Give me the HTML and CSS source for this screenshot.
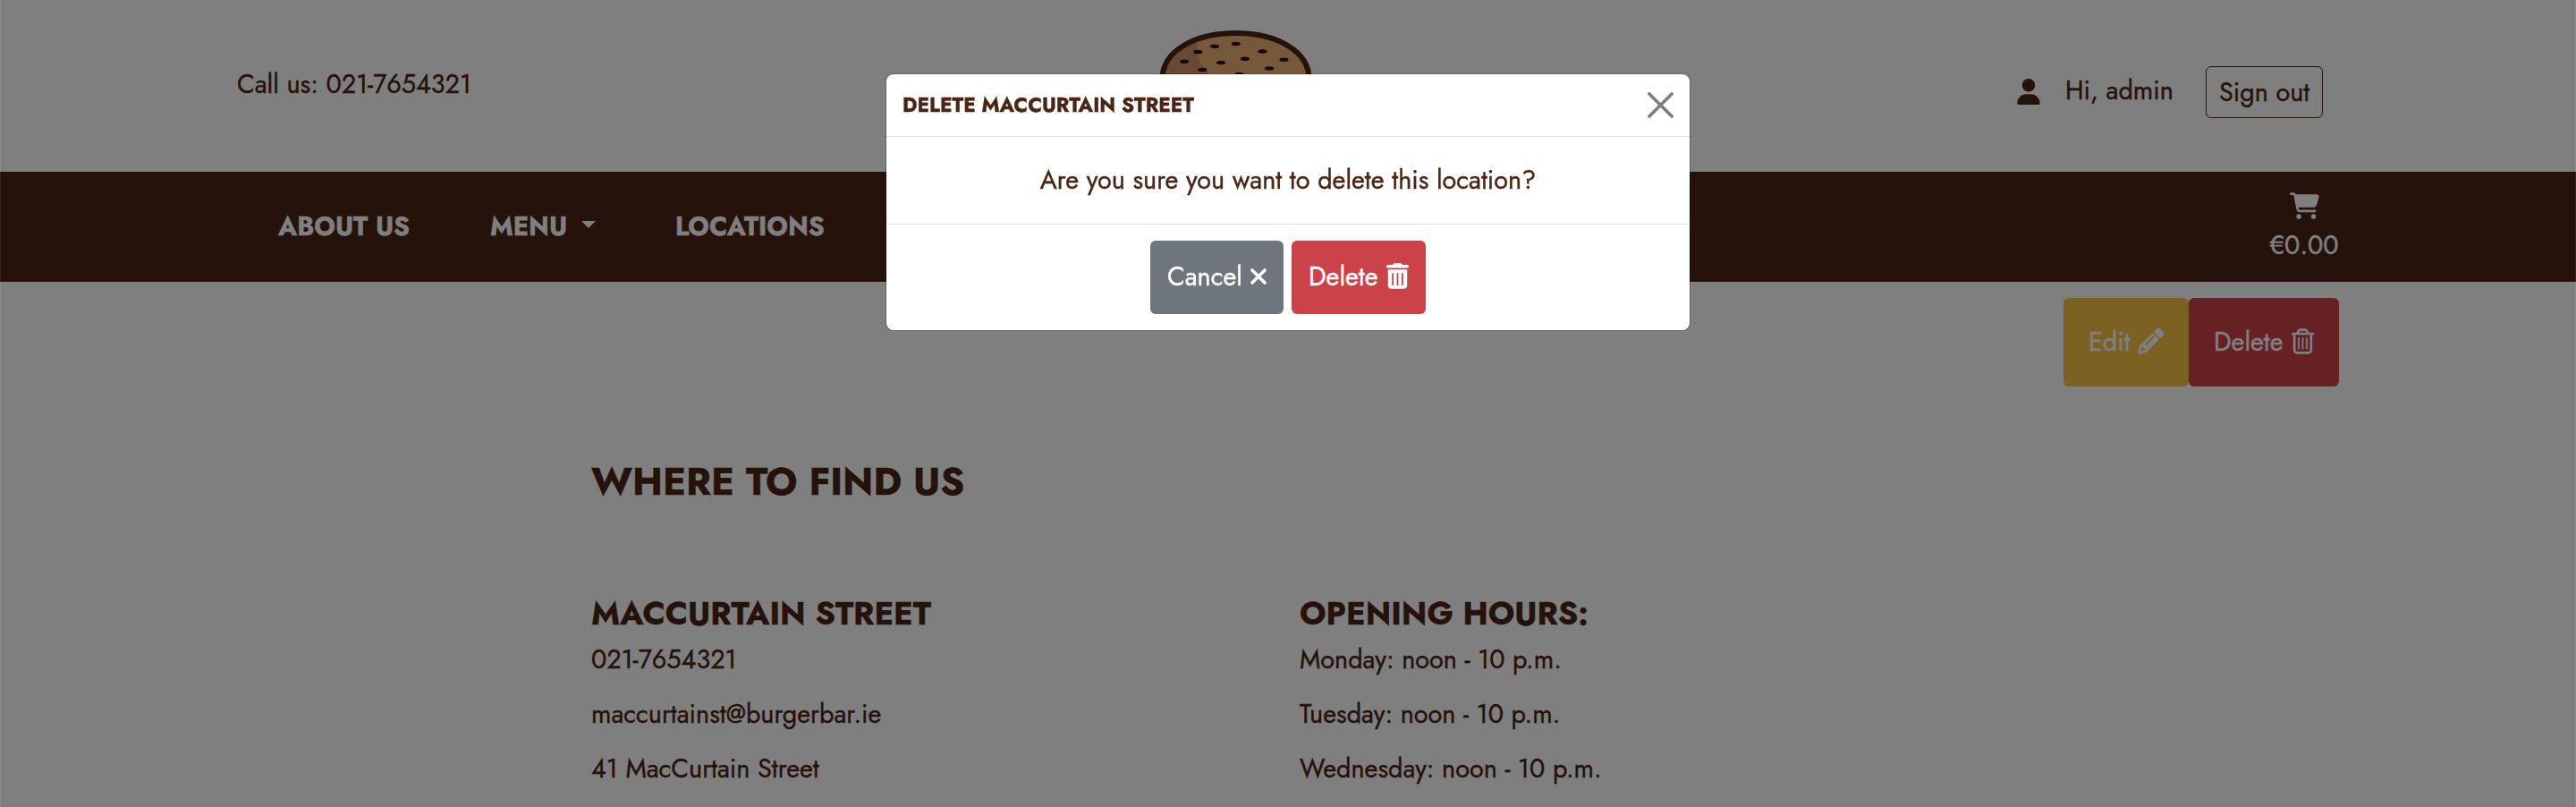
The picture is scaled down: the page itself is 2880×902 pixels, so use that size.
FILE: index.html
```html
<!DOCTYPE html>
<html lang="en">
<head>
<meta charset="utf-8">
<title>Burger Bar - Locations</title>
<link rel="stylesheet" href="styles.css">
</head>
<body>
<header class="topbar">
  <span class="call">Call us: 021-7654321</span>
  <svg class="logo" viewBox="0 0 170 120" preserveAspectRatio="none" aria-label="Burger Bar">
    <defs><clipPath id="bun"><path d="M4 66V54C4 24 40 4 85 4s81 20 81 50v12z"/></clipPath></defs>
    <g clip-path="url(#bun)">
      <rect width="170" height="70" fill="#d09266"/>
      <path d="M44 0C38 22 42 38 60 52Q68 60 80 70H170V0z" fill="#eab274"/>
    </g>
    <path d="M3.500 66V54C3.500 24 38 3 85 3s81.500 21 81.500 51v12z" fill="none" stroke="#4a2414" stroke-width="6"/>
    <g fill="#30120a">
      <ellipse cx="43" cy="24" rx="5" ry="2.200"/>
      <ellipse cx="61.700" cy="17.700" rx="5" ry="2.200"/>
      <ellipse cx="85.300" cy="15" rx="5" ry="2.200"/>
      <ellipse cx="114.700" cy="23.500" rx="5" ry="2.200"/>
      <ellipse cx="95.300" cy="31.800" rx="5" ry="2.200"/>
      <ellipse cx="138.700" cy="32.700" rx="5" ry="2.200"/>
      <ellipse cx="68.700" cy="36" rx="5" ry="2.200"/>
      <ellipse cx="28" cy="34.700" rx="5" ry="2.200"/>
      <ellipse cx="48" cy="44" rx="5" ry="2.200"/>
      <ellipse cx="122.300" cy="42.400" rx="5" ry="2.200"/>
      <ellipse cx="88.700" cy="49" rx="5" ry="2.200"/>
    </g>
  </svg>
  <div class="account">
    <svg class="icon user" viewBox="0 0 448 512"><path d="M224 256A128 128 0 1 0 224 0a128 128 0 1 0 0 256zm-45.700 48C79.800 304 0 383.800 0 482.300C0 498.700 13.300 512 29.700 512H418.300c16.400 0 29.700-13.300 29.700-29.700C448 383.800 368.200 304 269.700 304H178.300z"/></svg>
    <span class="greeting">Hi, admin</span>
    <a class="signout">Sign out</a>
  </div>
</header>

<nav class="navbar">
  <a class="about">ABOUT US</a>
  <a class="menu">MENU</a>
  <a class="places">LOCATIONS</a>
  <a class="cart">
    <svg class="icon" width="33" height="30" viewBox="0 0 576 512"><path d="M0 24C0 10.700 10.700 0 24 0H69.500c22 0 41.500 12.800 50.600 32h411c26.300 0 45.500 25 38.600 50.400l-41 152.300c-8.500 31.400-37 53.300-69.500 53.300H170.700l5.400 28.500c2.200 11.300 12.100 19.500 23.600 19.500H488c13.300 0 24 10.700 24 24s-10.700 24-24 24H199.700c-34.600 0-64.300-24.600-70.700-58.500L77.400 54.500c-.7-3.800-4-6.500-7.900-6.500H24C10.700 48 0 37.300 0 24zM128 464a48 48 0 1 1 96 0 48 48 0 1 1 -96 0zm336-48a48 48 0 1 1 0 96 48 48 0 1 1 0-96z"/></svg>
    <span class="price">€0.00</span>
  </a>
</nav>

<main>
  <div class="actions">
    <a class="btn edit"><span class="edit-label">Edit</span>
      <svg class="icon" width="29" height="29" viewBox="0 0 512 512"><path d="M410.300 231l11.300-11.300-33.900-33.900-62.100-62.100L291.700 89.800l-11.300 11.300-22.600 22.600L58.600 322.900c-10.400 10.400-18 23.300-22.200 37.400L1 480.700c-2.500 8.400-.2 17.500 6.100 23.700s15.300 8.500 23.700 6.100l120.300-35.400c14.100-4.200 27-11.800 37.400-22.200L387.700 253.700 410.300 231zM160 399.400l-9.100 22.700c-4 3.100-8.500 5.400-13.300 6.900L59.400 452l23-78.100c1.400-4.900 3.800-9.400 6.900-13.300l22.700-9.100v32c0 8.800 7.200 16 16 16h32zM362.700 18.700L348.300 33.200 325.700 55.800 314.300 67.100l33.900 33.900 62.100 62.100 33.900 33.900 11.300-11.300 22.600-22.600 14.500-14.500c25-25 25-65.500 0-90.500L453.300 18.700c-25-25-65.500-25-90.500 0zm-47.400 168l-144 144c-6.200 6.200-16.400 6.200-22.600 0s-6.200-16.400 0-22.600l144-144c6.200-6.200 16.400-6.200 22.600 0s6.200 16.400 0 22.600z"/></svg>
    </a>
    <a class="btn remove"><span class="delete-label">Delete</span>
      <svg class="icon" width="25" height="29" viewBox="0 0 448 512"><path d="M170.500 51.600L151.500 80h145l-19-28.400c-1.500-2.200-4-3.600-6.700-3.600H177.100c-2.700 0-5.200 1.300-6.700 3.600zm147-26.600L354.200 80H368h48 8c13.300 0 24 10.700 24 24s-10.700 24-24 24h-8V432c0 44.200-35.800 80-80 80H112c-44.200 0-80-35.800-80-80V128H24c-13.300 0-24-10.700-24-24S10.700 80 24 80h8H80 93.800l36.700-55.100C140.900 9.400 158.400 0 177.100 0h93.700c18.700 0 36.200 9.400 46.600 24.900zM80 128V432c0 17.700 14.300 32 32 32H336c17.700 0 32-14.300 32-32V128H80zm80 64V400c0 8.800-7.200 16-16 16s-16-7.200-16-16V192c0-8.800 7.200-16 16-16s16 7.200 16 16zm80 0V400c0 8.800-7.200 16-16 16s-16-7.200-16-16V192c0-8.800 7.200-16 16-16s16 7.200 16 16zm80 0V400c0 8.800-7.200 16-16 16s-16-7.200-16-16V192c0-8.800 7.200-16 16-16s16 7.200 16 16z"/></svg>
    </a>
  </div>

  <section class="content">
    <h2>WHERE TO FIND US</h2>
    <div class="columns">
      <div>
        <h3>MACCURTAIN STREET</h3>
        <p>021-7654321</p>
        <p>maccurtainst@burgerbar.ie</p>
        <p>41 MacCurtain Street</p>
      </div>
      <div>
        <h3>OPENING HOURS:</h3>
        <p>Monday: noon - 10 p.m.</p>
        <p>Tuesday: noon - 10 p.m.</p>
        <p>Wednesday: noon - 10 p.m.</p>
      </div>
    </div>
  </section>
</main>

<div class="backdrop">
  <div class="modal" role="dialog">
    <div class="modal-header">
      <h5>DELETE MACCURTAIN STREET</h5>
      <svg class="close" viewBox="0 0 30 30"><path d="M2 2L28 28M28 2L2 28" fill="none" stroke="#7f7f7f" stroke-width="3.800" stroke-linecap="round"/></svg>
    </div>
    <div class="modal-body">Are you sure you want to delete this location?</div>
    <div class="modal-footer">
      <button class="btn cancel"><span class="cancel-label">Cancel</span>
        <svg class="cross" width="18" height="18" viewBox="0 0 18 18"><path d="M2 2L16 16M16 2L2 16" fill="none" stroke="#fff" stroke-width="3.600" stroke-linecap="round"/></svg>
      </button>
      <button class="btn confirm"><span class="delete-label">Delete</span>
        <svg class="icon" width="25" height="29" viewBox="0 0 448 512"><path d="M135.200 17.700L128 32H32C14.300 32 0 46.300 0 64S14.300 96 32 96H416c17.700 0 32-14.300 32-32s-14.300-32-32-32H320l-7.200-14.300C307.400 6.800 296.300 0 284.200 0H163.800c-12.100 0-23.200 6.800-28.600 17.700zM416 128H32V448c0 35.300 28.700 64 64 64H352c35.300 0 64-28.700 64-64V128zM144 208V432c0 8.800-7.200 16-16 16s-16-7.200-16-16V208c0-8.800 7.200-16 16-16s16 7.200 16 16zm96 0V432c0 8.800-7.200 16-16 16s-16-7.200-16-16V208c0-8.800 7.200-16 16-16s16 7.200 16 16zm96 0V432c0 8.800-7.200 16-16 16s-16-7.200-16-16V208c0-8.800 7.200-16 16-16s16 7.200 16 16z"/></svg>
      </button>
    </div>
  </div>
</div>
</body>
</html>
```
FILE: styles.css
```css
* { box-sizing: border-box; }
html, body { height: 100%; overflow: hidden; }
body {
  margin: 0;
  background: #fff;
  color: #4a2414;
  font: 400 28.8px/44px Jost, Lato, "Open Sans", sans-serif;
  -webkit-text-stroke: .35px;
}
h2, h3, h5, p { margin: 0; }
h2, h3, h5 { font-weight: 700; white-space: nowrap; }
span, a, p { white-space: nowrap; }
svg { display: block; flex: none; }
.icon { fill: currentColor; }

.topbar { display: flex; align-items: flex-start; height: 192px; padding: 0 283px 0 265px; }
.call { width: 262px; margin-top: 72px; }
.logo { width: 171px; height: 120px; margin: 34px 0 0 769px; }
.account { display: flex; align-items: flex-start; margin: 74px 0 0 auto; }
.user { width: 26px; height: 29px; margin: 14px 28px 0 0; }
.greeting { width: 157px; margin-top: 5px; }
.signout {
  width: 131px; height: 58px; padding-left: 14px;
  border: 1px solid; border-radius: 6px;
  line-height: 56px;
}

.navbar {
  display: flex; align-items: flex-start; height: 123px; padding: 0 265px 0 311px;
  background: #4a2414; color: #fff; font-weight: 700;
}
.about { width: 237px; margin-top: 39px; }
.menu { display: flex; width: 207px; margin-top: 39px; }
.menu::after {
  content: ""; margin: 16px 0 0 16px; width: 0; height: 0;
  border: 8px solid transparent; border-top-color: #fff; border-bottom: 0;
}
.places { margin-top: 39px; }
.cart {
  display: flex; flex-direction: column; align-items: center; gap: 7px;
  width: 78px; margin: 23px 0 0 auto; font-weight: 400;
}

.btn {
  display: flex; align-items: flex-start; border: 0; border-radius: 6px;
  color: #fff; font: inherit; text-align: left;
}
.actions { display: flex; justify-content: flex-end; padding: 18px 265px 0 0; }
.actions .btn { height: 99px; padding-top: 27px; }
.actions .icon { margin-top: 7px; }
.edit { width: 140px; padding-left: 28px; background: #f6c244; }
.remove { width: 168px; padding-left: 28px; background: #cb4349; }
.edit-label { width: 55px; }
.delete-label { width: 86.5px; }

.content { padding: 76px 661px 0; }
h2 { font-size: 43.2px; line-height: 60px; }
.columns { display: grid; grid-template-columns: 792px 1fr; margin-top: 96px; }
h3 { margin-bottom: 1px; font-size: 36px; line-height: 42px; }
p { line-height: 61px; }

.backdrop {
  position: fixed; inset: 0; display: flex; justify-content: center; align-items: flex-start;
  padding-top: 82px; background: rgba(0, 0, 0, .5);
  box-shadow: inset 1px 0 rgba(255, 255, 255, .08), inset -1px 0 rgba(255, 255, 255, .08);
}
.modal {
  width: 900px; height: 288px; background: #fff; background-clip: padding-box;
  border: 1px solid rgba(0, 0, 0, .2); border-radius: 9px;
}
.modal-header {
  display: flex; justify-content: space-between; align-items: flex-start;
  height: 70px; padding: 12px 18px 0; border-bottom: 1px solid #dee2e6;
}
h5 { font-size: 22.5px; }
.close { width: 29px; height: 29px; margin-top: 8px; }
.modal-body { height: 97px; padding-top: 26px; text-align: center; }
.modal-footer {
  display: flex; justify-content: center; gap: 9px; padding-top: 18px; border-top: 1px solid #dee2e6;
}
.modal-footer .btn { height: 82px; padding: 18px 0 0 19px; }
.cancel { width: 149px; background: #6f757c; }
.cancel-label { width: 93px; }
.cross { margin-top: 12.5px; }
.confirm { width: 150px; background: #cb4349; }
.confirm .icon { margin-top: 7px; }
```
